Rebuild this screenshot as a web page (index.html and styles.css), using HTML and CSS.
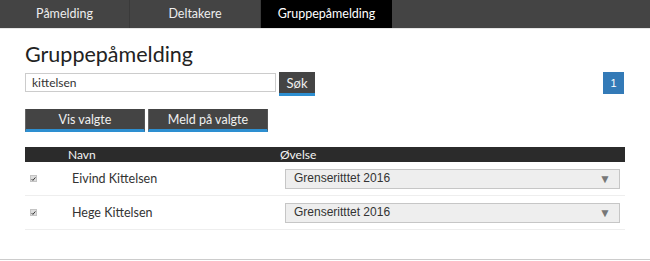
FILE: index.html
```html
<!DOCTYPE html>
<html lang="no">
<head>
<meta charset="utf-8">
<title>Gruppepåmelding</title>
<link rel="stylesheet" href="styles.css">
</head>
<body>
<nav class="tabs">
  <a class="tab">Påmelding</a>
  <a class="tab">Deltakere</a>
  <a class="tab active">Gruppepåmelding</a>
</nav>
<main class="content">
  <h1 class="title">Gruppepåmelding</h1>
  <div class="search-row">
    <input class="search-input" type="text" value="kittelsen">
    <button class="btn btn-search">Søk</button>
    <div class="pager"><span class="page active">1</span></div>
  </div>
  <div class="actions">
    <button class="btn btn-action">Vis valgte</button>
    <button class="btn btn-action">Meld på valgte</button>
  </div>
  <div class="table">
    <div class="thead">
      <span class="col-check"></span>
      <span class="col-name">Navn</span>
      <span class="col-event">Øvelse</span>
    </div>
    <div class="row">
      <span class="col-check"><span class="checkbox"><svg viewBox="0 0 8 8" width="6" height="6"><path d="M1 4.2 L3 6.2 L7 1.5" fill="none" stroke="#333" stroke-width="1.6"/></svg></span></span>
      <span class="col-name">Eivind Kittelsen</span>
      <span class="col-event"><span class="select"><span class="select-text">Grenseritttet 2016</span><span class="arrow">▼</span></span></span>
    </div>
    <div class="row">
      <span class="col-check"><span class="checkbox"><svg viewBox="0 0 8 8" width="6" height="6"><path d="M1 4.2 L3 6.2 L7 1.5" fill="none" stroke="#333" stroke-width="1.6"/></svg></span></span>
      <span class="col-name">Hege Kittelsen</span>
      <span class="col-event"><span class="select"><span class="select-text">Grenseritttet 2016</span><span class="arrow">▼</span></span></span>
    </div>
  </div>
</main>
<div class="footer-line"></div>
</body>
</html>
```
FILE: styles.css
```css
* { box-sizing: border-box; }
html, body { margin: 0; padding: 0; background: #fff; }
body {
  width: 650px;
  height: 261px;
  overflow: hidden;
  font-family: Lato, "Open Sans", sans-serif;
  color: #333;
}
.tabs {
  display: flex;
  height: 29px;
  background: #444;
  border-bottom: 1px solid #e6e6e6;
}
.tab {
  width: 130px;
  display: flex;
  align-items: center;
  justify-content: center;
  color: #eee;
  font-size: 12.5px;
  padding-bottom: 1px;
  border-right: 1px solid #3a3a3a;
}
.tab:nth-child(2) { width: 131px; }
.tab.active {
  background: #000;
  color: #fff;
  width: 131px;
  border-right: none;
}
.content {
  padding: 0 25px;
}
.title {
  margin: 0;
  padding-top: 10px;
  font-size: 21.5px;
  font-weight: 400;
  line-height: 30px;
  color: #222;
}
.search-row {
  display: flex;
  align-items: flex-start;
  margin-top: 3px;
  height: 24px;
}
.search-input {
  width: 251px;
  height: 19px;
  margin-top: 1px;
  border: 1px solid #ccc;
  padding: 0 6px;
  font-family: Lato, sans-serif;
  font-size: 12px;
  color: #333;
  outline: none;
}
.btn {
  font-family: Lato, sans-serif;
  background: #444;
  color: #f0f0f0;
  border: none;
  border-bottom: 3px solid #2d8fd1;
  padding: 0;
  cursor: pointer;
}
.btn-search {
  margin-left: 3px;
  width: 36px;
  height: 24px;
  font-size: 13px;
  line-height: 20px;
}
.pager {
  margin-left: auto;
  display: flex;
}
.page {
  width: 21px;
  height: 22px;
  display: flex;
  align-items: center;
  justify-content: center;
  background: #337ab7;
  color: #fff;
  font-family: "Liberation Sans", Arial, sans-serif;
  font-size: 11px;
  margin-right: 1px;
}
.actions {
  display: flex;
  gap: 3px;
  margin-top: 13px;
}
.btn-action {
  width: 120px;
  height: 23px;
  font-size: 12.5px;
  line-height: 19px;
  border-left: 1px solid #666;
  border-right: 1px solid #555;
}
.table {
  margin-top: 15px;
  width: 600px;
}
.thead {
  display: flex;
  height: 15px;
  align-items: center;
  background: #2b2b2b;
  color: #f4f4f4;
  font-size: 12px;
  line-height: 15px;
}
.col-check { width: 43px; flex: none; display: flex; align-items: center; padding-left: 5px; }
.thead .col-name { width: 212px; }
.row .col-name { width: 212px; padding-left: 4px; }
.col-name { flex: none; }
.col-event { flex: 1; }
.row {
  display: flex;
  align-items: center;
  height: 34px;
  border-bottom: 1px solid #eee;
  font-size: 12.5px;
}
.checkbox {
  width: 7px;
  height: 7px;
  background: #ddd;
  border: 1px solid #c4c4c4;
  display: flex;
  align-items: center;
  justify-content: center;
}
.checkbox svg { display: block; }
.select {
  display: flex;
  align-items: center;
  margin-left: 5px;
  width: 335px;
  height: 20px;
  border: 1px solid #c6c6c6;
  background: #eee;
  font-family: "Liberation Sans", Arial, sans-serif;
  font-size: 12px;
  color: #333;
  padding: 0 8px 0 8px;
}
.select-text { flex: 1; padding-bottom: 2px; }
.arrow { color: #777; font-size: 12px; }
.footer-line {
  margin-top: 29px;
  height: 1px;
  background: #ccc;
}
```
